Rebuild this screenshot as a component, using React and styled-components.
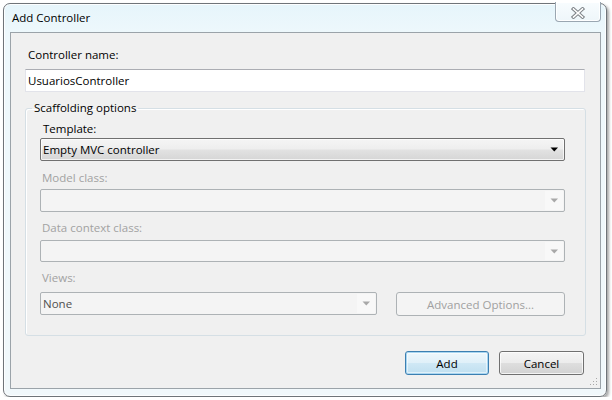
import React from "react";
import styled, { createGlobalStyle } from "styled-components";

const Global = createGlobalStyle`
  html, body { margin: 0; padding: 0; background: #ffffff; }
  body { font-family: "Open Sans", "Liberation Sans", sans-serif; }
  * { box-sizing: border-box; }
`;

const FONT = `"Open Sans", "Liberation Sans", sans-serif`;

const Window = styled.div`
  margin: 3px 0 0 3px;
  width: 604px;
  height: 394px;
  border: 1px solid #6f7479;
  border-radius: 7px;
  background: linear-gradient(180deg, #e6f5fb 0px, #eef8fc 30px, #f1f8fb 100%);
  box-shadow: inset 0 0 0 1px rgba(255, 255, 255, 0.85), 2px 2px 3px rgba(0, 0, 0, 0.35);
  display: flex;
  flex-direction: column;
  padding: 0 5px 7px 6px;
`;

const TitleBar = styled.div`
  height: 28px;
  display: flex;
  align-items: flex-start;
  justify-content: space-between;
`;

const Title = styled.div`
  font-family: ${FONT};
  font-size: 11.5px;
  line-height: 16px;
  color: #000;
  margin: 6px 0 0 2px;
`;

const CloseButton = styled.div`
  width: 46px;
  height: 20px;
  margin-top: -2px;
  border: 1px solid #9aa6b1;
  border-top: none;
  border-radius: 0 0 4px 4px;
  background: linear-gradient(180deg, #f8fcfe 0%, #eef6fa 100%);
  box-shadow: inset 0 0 0 1px rgba(255, 255, 255, 0.9);
  display: flex;
  align-items: center;
  justify-content: center;
  padding-top: 2px;
`;

const Client = styled.div`
  position: relative;
  flex: 1;
  border: 1px solid #9ba3a9;
  background: #f0f0f0;
  display: flex;
  flex-direction: column;
  align-items: flex-start;
  padding: 14px 15px 0 14px;
`;

const Label = styled.div`
  font-family: ${FONT};
  font-size: 11.5px;
  line-height: 16px;
  height: 16px;
  color: ${(p) => (p.$disabled ? "#a2a2a2" : "#000")};
  margin-top: ${(p) => p.$mt || 0}px;
  padding-left: ${(p) => p.$pl || 0}px;
  white-space: nowrap;
`;

const TextBox = styled.div`
  width: 560px;
  height: 23px;
  margin-top: 6px;
  background: #fff;
  border: 1px solid #e2e3ea;
  border-top-color: #abadb3;
  font-family: ${FONT};
  font-size: 11.5px;
  line-height: 21px;
  padding-left: 2px;
  color: #000;
`;

const Group = styled.fieldset`
  width: 561px;
  margin: 8px 0 0 0;
  padding: 0 20px 19px 14px;
  border: 1px solid #d5dfe5;
  border-radius: 3px;
  box-shadow: inset 1px 1px 0 #ffffff;
  display: flex;
  flex-direction: column;
  align-items: stretch;
`;

const Legend = styled.legend`
  font-family: ${FONT};
  font-size: 11.5px;
  line-height: 16px;
  color: #000;
  padding: 0 2px;
  margin-left: -8px;
`;

const Combo = styled.div`
  position: relative;
  height: ${(p) => p.$h || 23}px;
  width: ${(p) => (p.$w ? `${p.$w}px` : "auto")};
  margin-top: ${(p) => p.$mt || 0}px;
  border: 1px solid ${(p) => (p.$disabled ? "#adb2b5" : "#707070")};
  border-radius: 2px;
  background: ${(p) =>
    p.$disabled
      ? "#f4f4f4"
      : "linear-gradient(180deg, #f5f5f5 0%, #eeeeee 48%, #e2e2e2 52%, #d6d6d6 100%)"};
  box-shadow: ${(p) => (p.$disabled ? "none" : "inset 0 0 0 1px rgba(255,255,255,0.7)")};
  display: flex;
  align-items: center;
  font-family: ${FONT};
  font-size: 11.5px;
  color: ${(p) => (p.$disabled ? "#4f4f4f" : "#000")};
  padding-left: 2px;
`;

const ComboText = styled.span`
  flex: 1;
  white-space: nowrap;
  line-height: 16px;
`;

const ArrowZone = styled.div`
  width: 18px;
  align-self: stretch;
  display: flex;
  align-items: center;
  justify-content: center;
  background: ${(p) => (p.$disabled ? "#f8f8f8" : "transparent")};
  margin: 1px 1px 1px 0;
`;

const Row = styled.div`
  display: flex;
  align-items: flex-start;
  gap: 19px;
  margin-top: 6px;
`;

const Button = styled.div`
  width: ${(p) => p.$w}px;
  height: ${(p) => p.$h || 24}px;
  border-radius: 3px;
  border: 1px solid ${(p) => (p.$variant === "default" ? "#3c7fb1" : p.$variant === "disabled" ? "#adb2b5" : "#707070")};
  background: ${(p) =>
    p.$variant === "default"
      ? "linear-gradient(180deg, #eef7fc 0%, #e0f0f9 48%, #cfe8f5 52%, #bfdff0 100%)"
      : p.$variant === "disabled"
      ? "#f4f4f4"
      : "linear-gradient(180deg, #f4f4f4 0%, #ececec 48%, #dedede 52%, #d2d2d2 100%)"};
  box-shadow: ${(p) =>
    p.$variant === "default"
      ? "inset 0 0 0 1px #a9d6f1, inset 0 0 0 2px rgba(255,255,255,0.5)"
      : p.$variant === "disabled"
      ? "none"
      : "inset 0 0 0 1px rgba(255,255,255,0.75)"};
  display: flex;
  align-items: center;
  justify-content: center;
  font-family: ${FONT};
  font-size: 11.5px;
  color: ${(p) => (p.$variant === "disabled" ? "#a0a0a0" : "#000")};
  white-space: nowrap;
`;

const ButtonBar = styled.div`
  align-self: flex-end;
  display: flex;
  gap: 10px;
  margin-top: 15px;
  margin-right: 1px;
`;

const Grip = styled.svg`
  position: absolute;
  right: 2px;
  bottom: 2px;
`;

const Arrow = ({ disabled }) => (
  <svg width="9" height="5" viewBox="0 0 9 5">
    <path d="M0.5 0.5 H8 L4.25 4.5 Z" fill={disabled ? "#a8a8a8" : "#000"} />
  </svg>
);

const CloseGlyph = () => (
  <svg width="14" height="12" viewBox="0 0 14 12">
    <path d="M2.5 2 L11.5 10 M11.5 2 L2.5 10" stroke="#7d8287" strokeWidth="3.6" strokeLinecap="square" />
    <path d="M2.5 2 L11.5 10 M11.5 2 L2.5 10" stroke="#ffffff" strokeWidth="1.6" strokeLinecap="square" />
  </svg>
);

export default function App() {
  return (
    <>
      <Global />
      <Window>
        <TitleBar>
          <Title>Add Controller</Title>
          <CloseButton>
            <CloseGlyph />
          </CloseButton>
        </TitleBar>
        <Client>
          <Label $pl={3}>Controller name:</Label>
          <TextBox>UsuariosController</TextBox>
          <Group>
            <Legend>Scaffolding options</Legend>
            <Label $mt={5} $pl={3}>Template:</Label>
            <Combo $mt={1}>
              <ComboText>Empty MVC controller</ComboText>
              <ArrowZone>
                <Arrow />
              </ArrowZone>
            </Combo>
            <Label $mt={9} $pl={2} $disabled>Model class:</Label>
            <Combo $mt={3} $disabled>
              <ComboText />
              <ArrowZone $disabled>
                <Arrow disabled />
              </ArrowZone>
            </Combo>
            <Label $mt={8} $pl={2} $disabled>Data context class:</Label>
            <Combo $mt={4} $h={22} $disabled>
              <ComboText />
              <ArrowZone $disabled>
                <Arrow disabled />
              </ArrowZone>
            </Combo>
            <Label $mt={8} $pl={2} $disabled>Views:</Label>
            <Row>
              <Combo $w={337} $disabled>
                <ComboText>None</ComboText>
                <ArrowZone $disabled>
                  <Arrow disabled />
                </ArrowZone>
              </Combo>
              <Button $w={169} $variant="disabled">Advanced Options...</Button>
            </Row>
          </Group>
          <ButtonBar>
            <Button $w={84} $variant="default">Add</Button>
            <Button $w={85}>Cancel</Button>
          </ButtonBar>
          <Grip width="8" height="8" viewBox="0 0 8 8">
            <rect x="6" y="0" width="1" height="1" fill="#a8a8a8" />
            <rect x="3" y="3" width="1" height="1" fill="#a8a8a8" />
            <rect x="6" y="3" width="1" height="1" fill="#a8a8a8" />
            <rect x="0" y="6" width="1" height="1" fill="#a8a8a8" />
            <rect x="3" y="6" width="1" height="1" fill="#a8a8a8" />
            <rect x="6" y="6" width="1" height="1" fill="#a8a8a8" />
          </Grip>
        </Client>
      </Window>
    </>
  );
}
